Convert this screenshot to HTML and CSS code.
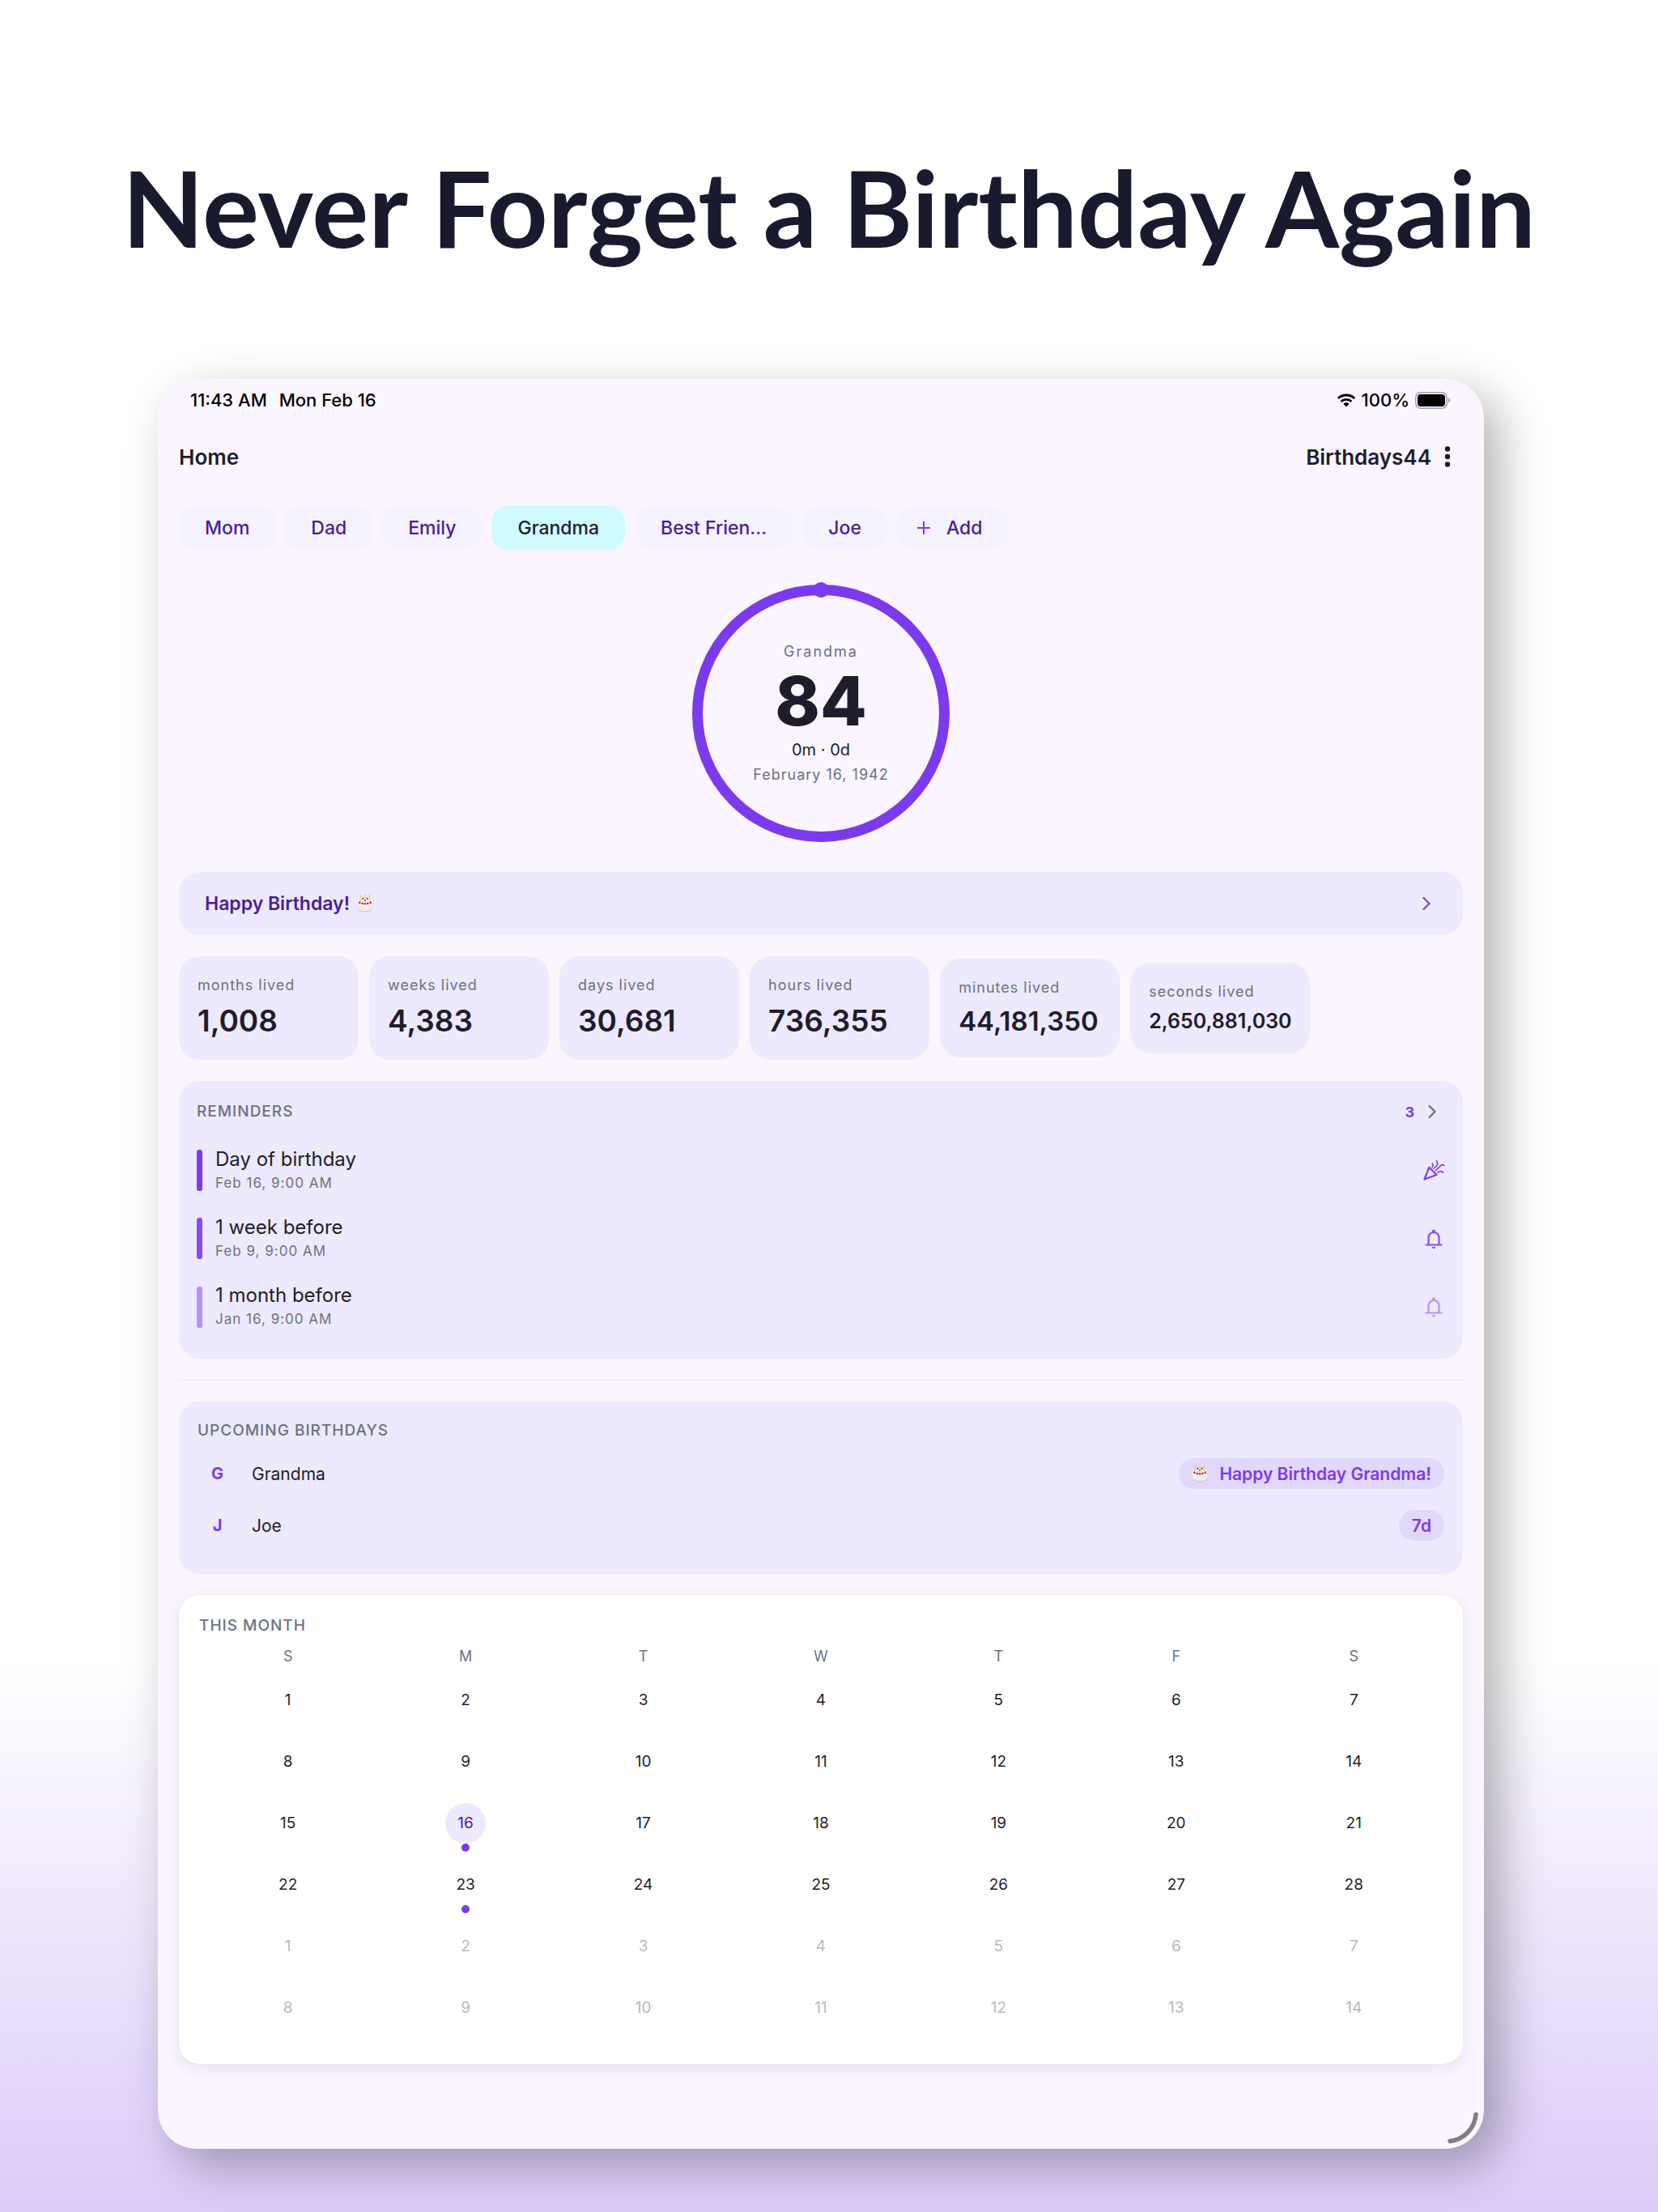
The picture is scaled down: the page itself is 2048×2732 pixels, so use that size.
FILE: index.html
```html
<!DOCTYPE html>
<html lang="en">
<head>
    <meta charset="UTF-8">
    <meta name="viewport" content="width=device-width, initial-scale=1.0">
    <title>Never Forget a Birthday Again</title>
    <link rel="stylesheet" href="styles.css">
</head>
<body>
    <!-- Shared icons -->
    <svg class="sprite" aria-hidden="true">
        <symbol id="chevron" viewBox="0 0 24 24">
            <path d="M7.500 5l7 7-7 7" fill="none" stroke="currentColor" stroke-width="2.400" stroke-linecap="round" stroke-linejoin="round"/>
        </symbol>
        <symbol id="bell" viewBox="0 0 28 28">
            <path d="M7.500 21v-8.500a6.500 6.500 0 0 1 13 0V21M4.500 21.500h19" fill="none" stroke="currentColor" stroke-width="2.200" stroke-linecap="round"/>
            <circle cx="14" cy="4.400" r="2" fill="currentColor"/>
            <path d="M11.800 24h4.400a2.200 2.200 0 0 1-4.400 0z" fill="currentColor"/>
        </symbol>
        <symbol id="party" viewBox="0 0 28 28">
            <g fill="none" stroke="currentColor" stroke-linecap="round" stroke-linejoin="round">
                <path d="M2.500 24.500L8.300 9.800l9.200 9.200z" stroke-width="2.200"/>
                <path d="M14 11.300l3.800-3.800c1.300-1.300 1.200-3 .2-4M16.500 13.800l6-6c1.300-1.300 3-1.300 4-.4M19 16.300c2-2.200 4.600-2.200 6.500-.2M12 9.300c1.500-1.300 1.600-2.800.3-4.300M17.500 2l.8 1.200" stroke-width="1.600"/>
            </g>
        </symbol>
        <symbol id="cake" viewBox="0 0 20 22">
            <path d="M.5 9v8c0 2.600 4.200 4.500 9.500 4.500s9.500-1.900 9.500-4.500V9z" fill="#d3cfcc"/>
            <path d="M.5 9v6.500c0 2.600 4.200 4.500 9.500 4.500s9.500-1.900 9.500-4.500V9z" fill="#efece9"/>
            <ellipse cx="10" cy="8.500" rx="9" ry="4.500" fill="#f9f7f4"/>
            <path d="M4.500.8v6M10 .8v6M15.500.8v6" stroke="#f0d072" stroke-width="1.600" stroke-linecap="round"/>
            <path d="M3.600 7v3M7 8v3M13 8v3M16.400 7v3M10 8v3" stroke="#d9c9c4" stroke-width="1"/>
            <g fill="#ad1640">
                <circle cx="7.300" cy="4.800" r="1.100"/><circle cx="12.700" cy="4.800" r="1.100"/>
                <circle cx="3.400" cy="9.800" r="1.200"/><circle cx="6.700" cy="11" r="1.200"/><circle cx="10" cy="11.200" r="1.200"/>
                <circle cx="13.300" cy="11" r="1.200"/><circle cx="16.600" cy="9.800" r="1.200"/><circle cx="10" cy="7.200" r="0.900"/>
            </g>
        </symbol>
    </svg>

    <h1 class="headline">Never Forget a Birthday Again</h1>

    <div class="device">
        <div class="status-bar">
            <span>11:43 AM</span>
            <span class="status-date">Mon Feb 16</span>
            <svg class="wifi" viewBox="0 0 24 17" aria-hidden="true">
                <path d="M1.800 6a15 15 0 0 1 20.400 0M5.600 9.900a9.500 9.500 0 0 1 12.800 0" fill="none" stroke="#000" stroke-width="2.800"/>
                <path d="M8.300 12.800a5.500 5.500 0 0 1 7.400 0L12 16.600z"/>
            </svg>
            <span>100%</span>
            <svg class="battery" viewBox="0 0 44 21" aria-hidden="true">
                <rect x="0.800" y="0.800" width="38.400" height="19.400" rx="6" fill="none" stroke="#a19da6" stroke-width="1.500"/>
                <rect x="3" y="3" width="34" height="15" rx="4"/>
                <path d="M41 7.500c3 1 3 5 0 6z" fill="#a19da6"/>
            </svg>
        </div>

        <header class="app-bar">
            <h2>Home</h2>
            <span class="account">Birthdays44</span>
            <button type="button" class="menu" aria-label="Menu">
                <svg viewBox="0 0 8 28" aria-hidden="true"><circle cx="4" cy="4.500" r="3.200"/><circle cx="4" cy="14" r="3.200"/><circle cx="4" cy="23.500" r="3.200"/></svg>
            </button>
        </header>

        <main>
            <nav class="people">
                <button type="button" class="chip">Mom</button>
                <button type="button" class="chip">Dad</button>
                <button type="button" class="chip">Emily</button>
                <button type="button" class="chip active">Grandma</button>
                <button type="button" class="chip">Best Frien…</button>
                <button type="button" class="chip">Joe</button>
                <button type="button" class="chip add">
                    <svg viewBox="0 0 18 18" aria-hidden="true"><path d="M9 1v16M1 9h16" stroke="#7c3aed" stroke-width="2"/></svg>
                    Add
                </button>
            </nav>

            <section class="ring">
                <svg viewBox="0 0 340 340" aria-hidden="true">
                    <circle cx="170" cy="170" r="152.500" fill="none" stroke="#7c3aed" stroke-width="13"/>
                    <circle cx="170" cy="17.500" r="9.500" fill="#7c3aed"/>
                </svg>
                <div class="ring-text">
                    <span class="ring-name">Grandma</span>
                    <strong class="ring-age">84</strong>
                    <span class="ring-rest">0m · 0d</span>
                    <span class="ring-date">February 16, 1942</span>
                </div>
            </section>

            <a href="#" class="banner">
                Happy Birthday!
                <svg class="cake" aria-hidden="true"><use href="#cake"/></svg>
                <svg class="chevron" aria-hidden="true"><use href="#chevron"/></svg>
            </a>

            <section class="stats">
                <div class="stat"><span>months lived</span><strong>1,008</strong></div>
                <div class="stat"><span>weeks lived</span><strong>4,383</strong></div>
                <div class="stat"><span>days lived</span><strong>30,681</strong></div>
                <div class="stat"><span>hours lived</span><strong>736,355</strong></div>
                <div class="stat medium"><span>minutes lived</span><strong>44,181,350</strong></div>
                <div class="stat small"><span>seconds lived</span><strong>2,650,881,030</strong></div>
            </section>

            <section class="reminders">
                <div class="reminders-head">
                    <h3>REMINDERS</h3>
                    <span class="count">3</span>
                    <svg class="chevron" aria-hidden="true"><use href="#chevron"/></svg>
                </div>
                <ul>
                    <li class="reminder">
                        <div><p>Day of birthday</p><small>Feb 16, 9:00 AM</small></div>
                        <svg class="icon" aria-hidden="true"><use href="#party"/></svg>
                    </li>
                    <li class="reminder near">
                        <div><p>1 week before</p><small>Feb 9, 9:00 AM</small></div>
                        <svg class="icon" aria-hidden="true"><use href="#bell"/></svg>
                    </li>
                    <li class="reminder far">
                        <div><p>1 month before</p><small>Jan 16, 9:00 AM</small></div>
                        <svg class="icon" aria-hidden="true"><use href="#bell"/></svg>
                    </li>
                </ul>
            </section>

            <hr>

            <section class="upcoming">
                <h3>UPCOMING BIRTHDAYS</h3>
                <ul>
                    <li class="person">
                        <b>G</b>
                        <span>Grandma</span>
                        <em class="pill"><svg class="cake" aria-hidden="true"><use href="#cake"/></svg>Happy Birthday Grandma!</em>
                    </li>
                    <li class="person">
                        <b>J</b>
                        <span>Joe</span>
                        <em class="pill">7d</em>
                    </li>
                </ul>
            </section>

            <section class="month">
                <h3>THIS MONTH</h3>
                <table>
                    <thead>
                        <tr><th>S</th><th>M</th><th>T</th><th>W</th><th>T</th><th>F</th><th>S</th></tr>
                    </thead>
                    <tbody>
                        <tr><td>1</td><td>2</td><td>3</td><td>4</td><td>5</td><td>6</td><td>7</td></tr>
                        <tr><td>8</td><td>9</td><td>10</td><td>11</td><td>12</td><td>13</td><td>14</td></tr>
                        <tr><td>15</td><td class="today event"><span>16</span></td><td>17</td><td>18</td><td>19</td><td>20</td><td>21</td></tr>
                        <tr><td>22</td><td class="event"><span>23</span></td><td>24</td><td>25</td><td>26</td><td>27</td><td>28</td></tr>
                        <tr class="next"><td>1</td><td>2</td><td>3</td><td>4</td><td>5</td><td>6</td><td>7</td></tr>
                        <tr class="next"><td>8</td><td>9</td><td>10</td><td>11</td><td>12</td><td>13</td><td>14</td></tr>
                    </tbody>
                </table>
            </section>
        </main>

        <svg class="corner" viewBox="0 0 40 40" aria-hidden="true">
            <path d="M36 3.500A36 36 0 0 1 4 36.500" fill="none" stroke="#808080" stroke-width="5.500" stroke-linecap="round"/>
        </svg>
    </div>
</body>
</html>
```

FILE: styles.css
```css
* {
    box-sizing: border-box;
}
body {
    margin: 0;
    min-height: 100vh;
    padding: 176px 215px 78px 195px;
    font-family: Inter, "Liberation Sans", sans-serif;
    color: #1f1d2b;
    background: linear-gradient(#fff 0%, #fff 75%, #dccbf9 100%);
}
h1, h2, h3, p, ul {
    margin: 0;
    padding: 0;
}
ul {
    list-style: none;
}
button {
    border: 0;
    padding: 0;
    background: none;
    font: inherit;
    color: inherit;
    cursor: pointer;
}
svg {
    display: block;
    flex: none;
}
.sprite {
    position: absolute;
    width: 0;
    height: 0;
}
.headline {
    margin: 0 -195px 132px -175px;
    font-family: Lato, sans-serif;
    font-size: 131px;
    font-weight: 700;
    line-height: 160px;
    text-align: center;
    color: #1a1a2e;
}

/* Tablet */
.device {
    position: relative;
    padding: 0 26px 105px;
    border-radius: 48px;
    background: #faf5ff;
    box-shadow: 20px 20px 60px rgba(0, 0, 0, 0.3);
}
.status-bar {
    display: flex;
    align-items: center;
    height: 52px;
    padding: 0 15px 0 14px;
    font-size: 22px;
    font-weight: 500;
    color: #000;
}
.status-date {
    margin-left: 15px;
}
.wifi {
    width: 24px;
    height: 17px;
    margin: 0 7px 0 auto;
}
.battery {
    width: 44px;
    height: 21px;
    margin-left: 7px;
}
.app-bar {
    display: flex;
    align-items: center;
    height: 88px;
    padding-right: 15px;
    font-size: 26px;
    font-weight: 600;
}
.app-bar h2 {
    flex: 1;
    font-size: 26px;
    font-weight: 600;
}
.menu {
    margin-left: 16px;
}
.menu svg {
    width: 8px;
    height: 28px;
    fill: #1f1d2b;
}
main {
    display: flex;
    flex-direction: column;
    gap: 26px;
    padding-top: 17px;
}

/* People */
.people {
    display: flex;
    gap: 12px;
}
.chip {
    display: flex;
    align-items: center;
    height: 54px;
    padding: 0 32px;
    border-radius: 20px;
    background: #f5f3ff;
    font-size: 23px;
    font-weight: 500;
    color: #4c1d95;
}
.chip.active {
    background: #cffafe;
    color: #1f1d2b;
}
.chip.add {
    gap: 19px;
    padding-left: 24px;
}
.add svg {
    width: 18px;
    height: 18px;
}

/* Age ring */
.ring {
    display: grid;
    justify-content: center;
    margin-top: 6px;
}
.ring svg, .ring-text {
    grid-area: 1 / 1;
}
.ring svg {
    width: 340px;
    height: 340px;
}
.ring-text {
    display: flex;
    flex-direction: column;
    align-items: center;
    justify-content: center;
}
.ring-name, .ring-date {
    font-size: 18px;
    line-height: 24px;
    letter-spacing: 1px;
    color: #6b7280;
}
.ring-name {
    letter-spacing: 2px;
}
.ring-age {
    font-size: 84px;
    font-weight: 800;
    line-height: 98px;
}
.ring-rest {
    margin-bottom: 8px;
    font-size: 20px;
    line-height: 22px;
}

/* Banner */
.banner {
    display: flex;
    align-items: center;
    height: 78px;
    padding: 0 32px;
    border-radius: 26px;
    background: #ede9fe;
    font-size: 23px;
    font-weight: 600;
    text-decoration: none;
    color: #4c1d95;
}
.cake {
    width: 20px;
    height: 22px;
}
.banner .cake {
    margin-left: 9px;
}
.chevron {
    width: 24px;
    height: 24px;
}
.banner .chevron {
    margin-left: auto;
    opacity: 0.7;
}

/* Stats */
.stats {
    display: flex;
    align-items: center;
    gap: 13px;
}
.stat {
    display: flex;
    flex-direction: column;
    gap: 8px;
    width: 14%;
    padding: 24px 23px;
    border-radius: 26px;
    background: #ede9fe;
}
.stat span {
    font-size: 18px;
    line-height: 24px;
    letter-spacing: 1px;
    color: #6b7280;
}
.stat strong {
    font-size: 37px;
    font-weight: 600;
    line-height: 48px;
}
.stat.medium strong {
    font-size: 33px;
    line-height: 42px;
}
.stat.small strong {
    font-size: 25px;
    line-height: 32px;
}

/* Cards */
.reminders, .upcoming, .month {
    border-radius: 26px;
    background: #ede9fe;
}
h3 {
    font-size: 19px;
    font-weight: 500;
    line-height: 24px;
    letter-spacing: 1px;
    color: #6b7280;
}
.icon {
    width: 28px;
    height: 28px;
}
.reminders {
    padding: 24px 22px 22px;
}
.reminders-head {
    display: flex;
    align-items: center;
    height: 28px;
    margin-bottom: 17px;
    color: #6b7280;
}
.reminders-head h3 {
    flex: 1;
}
.reminders-head .chevron {
    margin-right: 3px;
}
.count {
    margin-right: 11px;
    font-size: 18px;
    font-weight: 700;
    color: #7c3aed;
}
.reminder {
    display: flex;
    align-items: center;
    gap: 16px;
    height: 84px;
    border-bottom: 1px solid #ebe7f9;
    color: #7c3aed;
}
.reminder::before {
    content: "";
    width: 7px;
    height: 51px;
    border-radius: 3px;
    background: currentColor;
}
.reminder:last-child {
    border-bottom: 0;
}
.reminder.near {
    color: #874bef;
}
.reminder.far {
    color: #b593f6;
}
.reminder div {
    flex: 1;
}
.reminder p {
    font-size: 24px;
    line-height: 30px;
    color: #1f1d2b;
}
.reminder small {
    display: block;
    font-size: 17px;
    line-height: 28px;
    letter-spacing: 1px;
    color: #6b7280;
}
hr {
    width: 100%;
    height: 1px;
    margin: 0;
    border: 0;
    background: #ebe7f6;
}
.upcoming {
    padding: 24px 23px 28px;
}
.upcoming h3 {
    margin-bottom: 9px;
}
.person {
    display: flex;
    align-items: center;
    gap: 18px;
    height: 64px;
    font-size: 21px;
}
.person b {
    width: 49px;
    text-align: center;
    font-size: 20px;
    color: #7c3aed;
}
.person span {
    flex: 1;
}
.pill {
    display: flex;
    align-items: center;
    gap: 14px;
    height: 38px;
    padding: 0 16px;
    border-radius: 19px;
    background: #e2d8fc;
    font-style: normal;
    font-weight: 600;
    color: #7c3aed;
}

/* Calendar */
.month {
    padding: 26px 25px 22px;
    background: #fff;
    box-shadow: 0 6px 20px rgba(31, 29, 43, 0.09);
}
table {
    width: 100%;
    border-spacing: 0;
    table-layout: fixed;
    font-size: 19px;
    text-align: center;
}
th {
    height: 51px;
    padding: 0;
    font-size: 18px;
    font-weight: 400;
    color: #6b7280;
}
td {
    position: relative;
    height: 76px;
    padding: 4px 0 22px;
    line-height: 50px;
}
.next td {
    color: #b9b9be;
}
.today span {
    display: inline-block;
    width: 50px;
    border-radius: 50%;
    background: #ede9fe;
    color: #4c1d95;
}
/* Birthday marker under the day */
.event::after {
    content: "";
    position: absolute;
    left: calc(50% - 5px);
    top: 54px;
    width: 10px;
    height: 10px;
    border-radius: 50%;
    background: #7c3aed;
}
.corner {
    position: absolute;
    right: 6px;
    bottom: 6px;
    width: 40px;
    height: 40px;
}
```
